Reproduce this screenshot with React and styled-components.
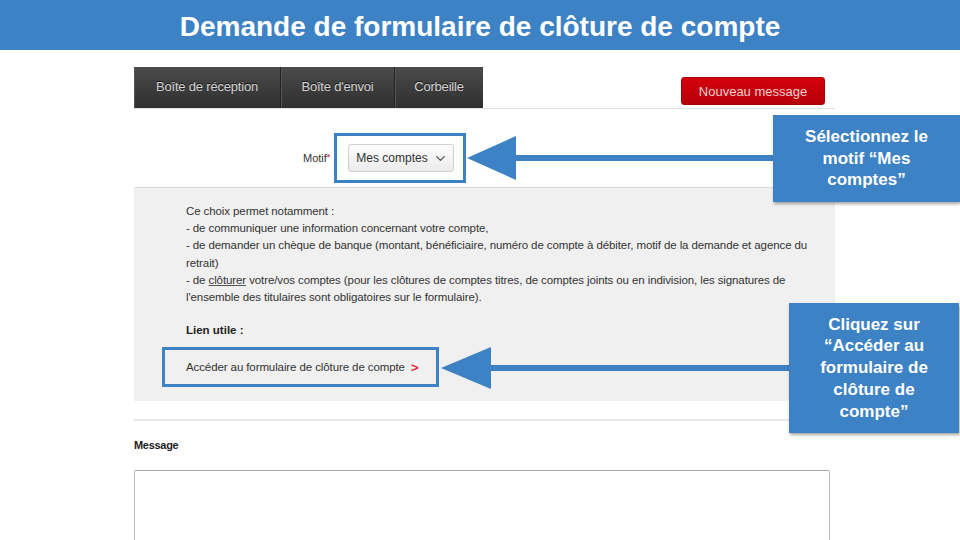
import styled, { createGlobalStyle } from "styled-components";
import { ChevronDown } from "lucide-react";

const GlobalStyle = createGlobalStyle`
  html, body {
    margin: 0;
    padding: 0;
    background: #fff;
  }
  body {
    font-family: "Liberation Sans", Arial, sans-serif;
  }
`;

function App() {
  return (
    <Page>
      <GlobalStyle />
      <Header>Demande de formulaire de clôture de compte</Header>
      <Shot>
        <TopBar>
          <Tabs>
            <Tab $w={147}>Boîte de réception</Tab>
            <Tab $w={114}>Boîte d'envoi</Tab>
            <Tab $w={88}>Corbeille</Tab>
          </Tabs>
          <NewButton>Nouveau message</NewButton>
        </TopBar>

        <MotifRow>
          <Label>
            Motif<Star>*</Star>
          </Label>
          <Highlight>
            <Select>
              Mes comptes
              <ChevronDown size={15} strokeWidth={2.2} color="#555" />
            </Select>
          </Highlight>
        </MotifRow>

        <Panel>
          <Info>
            Ce choix permet notamment :<br />
            - de communiquer une information concernant votre compte,
            <br />- de demander un chèque de banque (montant, bénéficiaire,
            numéro de compte à débiter, motif de la demande et agence du
            <br />
            retrait)
            <br />- de <u>clôturer</u> votre/vos comptes (pour les clôtures de
            comptes titres, de comptes joints ou en indivision, les signatures
            de
            <br />
            l'ensemble des titulaires sont obligatoires sur le formulaire).
          </Info>
          <LinkTitle>Lien utile :</LinkTitle>
          <LinkBox>
            Accéder au formulaire de clôture de compte
            <Chevron>&gt;</Chevron>
          </LinkBox>
        </Panel>

        <Divider />
        <MessageLabel>Message</MessageLabel>
        <TextArea />
      </Shot>

      <Arrows width="960" height="540" viewBox="0 0 960 540">
        <rect x="505" y="155" width="270" height="6" fill="#3d82c4" />
        <polygon points="467,158 516,136 516,180" fill="#3d82c4" />
        <rect x="485" y="365" width="306" height="6" fill="#3d82c4" />
        <polygon points="441,368 491,347 491,389" fill="#3d82c4" />
      </Arrows>

      <Callout $top={115} $left={773} $w={187} $h={87}>
        Sélectionnez le
        <br />
        motif “Mes
        <br />
        comptes”
      </Callout>
      <Callout $top={303} $left={789} $w={170} $h={130}>
        Cliquez sur
        <br />
        “Accéder au
        <br />
        formulaire de
        <br />
        clôture de
        <br />
        compte”
      </Callout>
    </Page>
  );
}
export default App;

const Page = styled.div`
  position: relative;
  width: 960px;
  height: 540px;
  overflow: hidden;
  background: #fff;
`;

const Header = styled.div`
  height: 50px;
  background: #3d82c4;
  color: #fff;
  display: flex;
  align-items: center;
  justify-content: center;
  font-size: 28px;
  font-weight: bold;
  padding-top: 3px;
  box-sizing: border-box;
`;

const Shot = styled.div`
  margin-left: 134px;
  width: 701px;
  padding-top: 17px;
  font-family: "Liberation Sans", Arial, sans-serif;
  color: #333;
`;

const TopBar = styled.div`
  display: flex;
  justify-content: space-between;
  align-items: flex-start;
  height: 41px;
  border-bottom: 1px solid #e2e2e2;
`;

const Tabs = styled.div`
  display: flex;
  height: 41px;
  background: linear-gradient(#4b4b4b, #2f2f2f);
`;

const Tab = styled.div`
  width: ${(p) => p.$w}px;
  display: flex;
  align-items: center;
  justify-content: center;
  font-size: 13px;
  color: #d6d6d6;
  text-shadow: 0 -1px 0 #111;
  border-right: 1px solid #222;
  box-shadow: inset 1px 0 0 #555;
  box-sizing: border-box;
  letter-spacing: -0.2px;
  padding-bottom: 2px;
  &:last-child {
    border-right: none;
  }
`;

const NewButton = styled.div`
  margin-top: 10px;
  margin-right: 10px;
  width: 144px;
  height: 28px;
  box-sizing: border-box;
  border-radius: 3px;
  border: 1px solid #a30008;
  background: linear-gradient(#d4000d, #b5000a);
  color: #f0d0d0;
  font-size: 13px;
  display: flex;
  align-items: center;
  justify-content: center;
`;

const MotifRow = styled.div`
  height: 78px;
  display: flex;
  align-items: center;
  padding-left: 169px;
  padding-top: 20px;
  box-sizing: border-box;
`;

const Label = styled.div`
  font-size: 11px;
  color: #333;
  width: 31px;
`;

const Star = styled.span`
  color: #d0021b;
  font-size: 9px;
  vertical-align: top;
`;

const Highlight = styled.div`
  width: 132px;
  height: 50px;
  box-sizing: border-box;
  border: 3px solid #3d82c4;
  display: flex;
  align-items: center;
  padding-left: 11px;
`;

const Select = styled.div`
  width: 106px;
  height: 28px;
  box-sizing: border-box;
  border: 1px solid #d0d0d0;
  border-radius: 3px;
  background: linear-gradient(#fcfcfc, #ececec);
  font-size: 12px;
  color: #333;
  display: flex;
  align-items: center;
  justify-content: center;
  gap: 5px;
  padding-left: 2px;
`;

const Panel = styled.div`
  height: 214px;
  box-sizing: border-box;
  background: #f0f0f0;
  border-top: 1px solid #dcdcdc;
  padding: 15px 0 0 28px;
`;

const Info = styled.div`
  margin-left: 24px;
  font-size: 11.5px;
  line-height: 17.2px;
  color: #333;
  letter-spacing: -0.1px;

  u {
    text-decoration-color: #555;
  }
`;

const LinkTitle = styled.div`
  margin: 16px 0 0 24px;
  font-size: 11.5px;
  font-weight: bold;
  line-height: 17px;
  color: #222;
`;

const LinkBox = styled.div`
  margin-top: 8px;
  width: 277px;
  height: 40px;
  box-sizing: border-box;
  border: 3px solid #3d82c4;
  display: flex;
  align-items: center;
  padding-left: 21px;
  font-size: 11.5px;
  color: #333;
  letter-spacing: -0.1px;
`;

const Chevron = styled.span`
  color: #e0262f;
  font-weight: bold;
  font-size: 13px;
  margin-left: 6px;
`;

const Divider = styled.div`
  margin-top: 18px;
  border-top: 2px solid #e8e8e8;
`;

const MessageLabel = styled.div`
  margin-top: 18px;
  font-size: 11px;
  font-weight: bold;
  color: #222;
  letter-spacing: -0.3px;
`;

const TextArea = styled.div`
  margin-top: 19px;
  width: 696px;
  height: 120px;
  box-sizing: border-box;
  border: 1px solid #b8b8b8;
  border-top-color: #a8a8a8;
  border-radius: 2px;
  background: #fff;
`;

const Arrows = styled.svg`
  position: absolute;
  left: 0;
  top: 0;
  pointer-events: none;
`;

const Callout = styled.div`
  position: absolute;
  top: ${(p) => p.$top}px;
  left: ${(p) => p.$left}px;
  width: ${(p) => p.$w}px;
  height: ${(p) => p.$h}px;
  box-sizing: border-box;
  background: #3d82c4;
  color: #fff;
  font-weight: bold;
  font-size: 17px;
  line-height: 21.8px;
  text-align: center;
  display: flex;
  align-items: center;
  justify-content: center;
  box-shadow: 1px 2px 3px rgba(0, 0, 0, 0.35);
`;
